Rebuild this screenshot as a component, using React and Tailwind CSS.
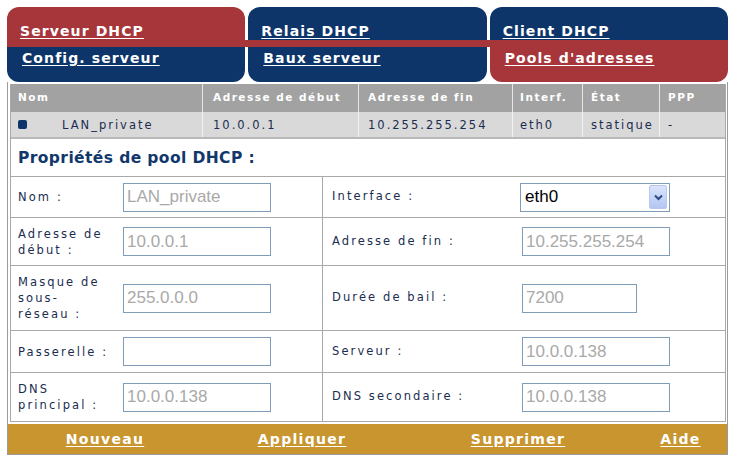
import React from "react";

const RED = "bg-[#a6363a]";
const NAVY = "bg-[#0d3569]";

const Tab = ({ label, color, top }) => (
  <div
    className={`flex-1 flex ${color} ${
      top ? "rounded-t-[12px] items-end pb-[1px] pl-[13px]" : "rounded-b-[12px] items-start pt-[3px] pl-[15px]"
    }`}
  >
    <a className="text-white font-bold text-[14px] leading-[16px] tracking-[1.1px] underline underline-offset-[2px]">
      {label}
    </a>
  </div>
);

const Label = ({ children }) => (
  <div className="flex items-center pl-[7px] text-[11.5px] leading-[16px] tracking-[2.1px] text-[#1a2d50]">
    <span>{children}</span>
  </div>
);

const Field = ({ value, short }) => (
  <div className="flex items-center">
    <div
      className={`${short ? "w-[115px]" : "w-[148px]"} h-[29px] border border-[#7f9db9] bg-white flex items-center pl-[3px] font-['Liberation_Sans',sans-serif] text-[17px] text-[#a9a9a9]`}
    >
      {value}
    </div>
  </div>
);

const Select = ({ value }) => (
  <div className="flex items-center -ml-[2px]">
    <div className="w-[150px] h-[29px] border border-[#7f9db9] bg-white flex items-center pl-[4px] pr-[2px] font-['Liberation_Sans',sans-serif] text-[17px] text-black">
      <span className="flex-1">{value}</span>
      <div className="w-[18px] h-[24px] rounded-[2px] border border-[#b7c8ec] bg-gradient-to-b from-[#dbe5fb] to-[#b2c6f1] flex items-center justify-center">
        <svg width="9" height="7" viewBox="0 0 9 7">
          <path d="M1 1.5 L4.5 5 L8 1.5" fill="none" stroke="#2b4a86" strokeWidth="2" />
        </svg>
      </div>
    </div>
  </div>
);

const rows = [
  { h: "h-[41px]", l: ["Nom :"], lv: "LAN_private", r: "Interface :", rv: "eth0", select: true },
  { h: "h-[48px]", l: ["Adresse de", "début :"], lv: "10.0.0.1", r: "Adresse de fin :", rv: "10.255.255.254" },
  { h: "h-[65px]", l: ["Masque de", "sous-", "réseau :"], lv: "255.0.0.0", r: "Durée de bail :", rv: "7200", shortRight: true },
  { h: "h-[42px]", l: ["Passerelle :"], lv: "", r: "Serveur :", rv: "10.0.0.138" },
  { h: "h-[48px]", l: ["DNS", "principal :"], lv: "10.0.0.138", r: "DNS secondaire :", rv: "10.0.0.138", last: true },
];

const cols = [
  { t: "Nom", w: "w-[191px]", pl: "pl-[7px]" },
  { t: "Adresse de début", w: "w-[156px]", pl: "pl-[10px]" },
  { t: "Adresse de fin", w: "w-[154px]", pl: "pl-[9px]" },
  { t: "Interf.", w: "w-[70px]", pl: "pl-[7px]" },
  { t: "État", w: "w-[77px]", pl: "pl-[8px]" },
  { t: "PPP", w: "w-[66px]", pl: "pl-[8px]" },
];

const data = ["LAN_private", "10.0.0.1", "10.255.255.254", "eth0", "statique", "-"];

export default function App() {
  return (
    <div className="w-[732px] h-[465px] bg-white font-['DejaVu_Sans',sans-serif] pt-[7px] pl-[7px]">
      <div className="w-[721px]">
        {/* tabs level 1 */}
        <div className="flex gap-[3px] h-[33px]">
          <Tab label="Serveur DHCP" color={RED} top />
          <Tab label="Relais DHCP" color={NAVY} top />
          <Tab label="Client DHCP" color={NAVY} top />
        </div>
        <div className={`h-[7px] ${RED}`} />
        {/* tabs level 2 */}
        <div className="flex gap-[3px] h-[35px]">
          <Tab label="Config. serveur" color={NAVY} />
          <Tab label="Baux serveur" color={NAVY} />
          <Tab label="Pools d'adresses" color={RED} />
        </div>

        {/* body */}
        <div className="border-x border-b border-[#9c9c9c] pl-[2px] pr-[1px] pt-[2px]">
          <div className="border-x border-b border-[#a9a9a9]">
            {/* list header */}
            <div className="flex h-[28px] bg-[#a2a2a2]">
              {cols.map((c, i) => (
                <div
                  key={c.t}
                  className={`${c.w} ${c.pl} flex items-center text-white font-bold text-[10.5px] tracking-[1.5px] ${
                    i > 0 ? "border-l border-[#e6e6e6]" : ""
                  }`}
                >
                  {c.t}
                </div>
              ))}
            </div>
            {/* list row */}
            <div className="flex h-[27px] bg-[#d9d9d9] border-b-2 border-[#b9b9b9]">
              {cols.map((c, i) => (
                <div
                  key={c.t}
                  className={`${c.w} ${c.pl} flex items-center pt-[3px] text-[11.5px] tracking-[2px] text-[#1a2d50] ${
                    i > 0 ? "border-l border-[#f2f2f2]" : ""
                  }`}
                >
                  {i === 0 && (
                    <span className="w-[9px] h-[9px] rounded-[2px] bg-[#0d3569] mr-[35px] -mt-[3px]" />
                  )}
                  {data[i]}
                </div>
              ))}
            </div>

            {/* properties */}
            <div className="h-[38px] border-b border-[#a9a9a9] flex items-center pl-[7px] pt-[2px] font-bold text-[15.5px] tracking-[0.4px] text-[#12386b]">
              Propriétés de pool DHCP :
            </div>
            {rows.map((r, i) => (
              <div
                key={i}
                className={`grid grid-cols-[112px_200px_199px_203px] ${r.h} ${
                  r.last ? "" : "border-b border-[#a9a9a9]"
                }`}
              >
                <Label>
                  {r.l.map((t, j) => (
                    <React.Fragment key={j}>
                      {j > 0 && <br />}
                      {t}
                    </React.Fragment>
                  ))}
                </Label>
                <div className="border-r border-[#a9a9a9] flex">
                  <Field value={r.lv} />
                </div>
                <div className="flex items-center pl-[9px] text-[11.5px] tracking-[2.1px] text-[#1a2d50]">
                  {r.r}
                </div>
                {r.select ? <Select value={r.rv} /> : <Field value={r.rv} short={r.shortRight} />}
              </div>
            ))}
          </div>

          {/* footer */}
          <div className="mt-[2px] -ml-[2px] -mr-[1px] h-[30px] bg-[#c8952f] shadow-[1px_1px_0_#9a9a9a] rounded-br-[3px] grid grid-cols-[194px_200px_232px_93px] items-center">
            {["Nouveau", "Appliquer", "Supprimer", "Aide"].map((t) => (
              <div key={t} className="text-center">
                <a className="text-white font-bold text-[14px] tracking-[1.3px] underline underline-offset-[2px]">
                  {t}
                </a>
              </div>
            ))}
          </div>
        </div>
      </div>
    </div>
  );
}
